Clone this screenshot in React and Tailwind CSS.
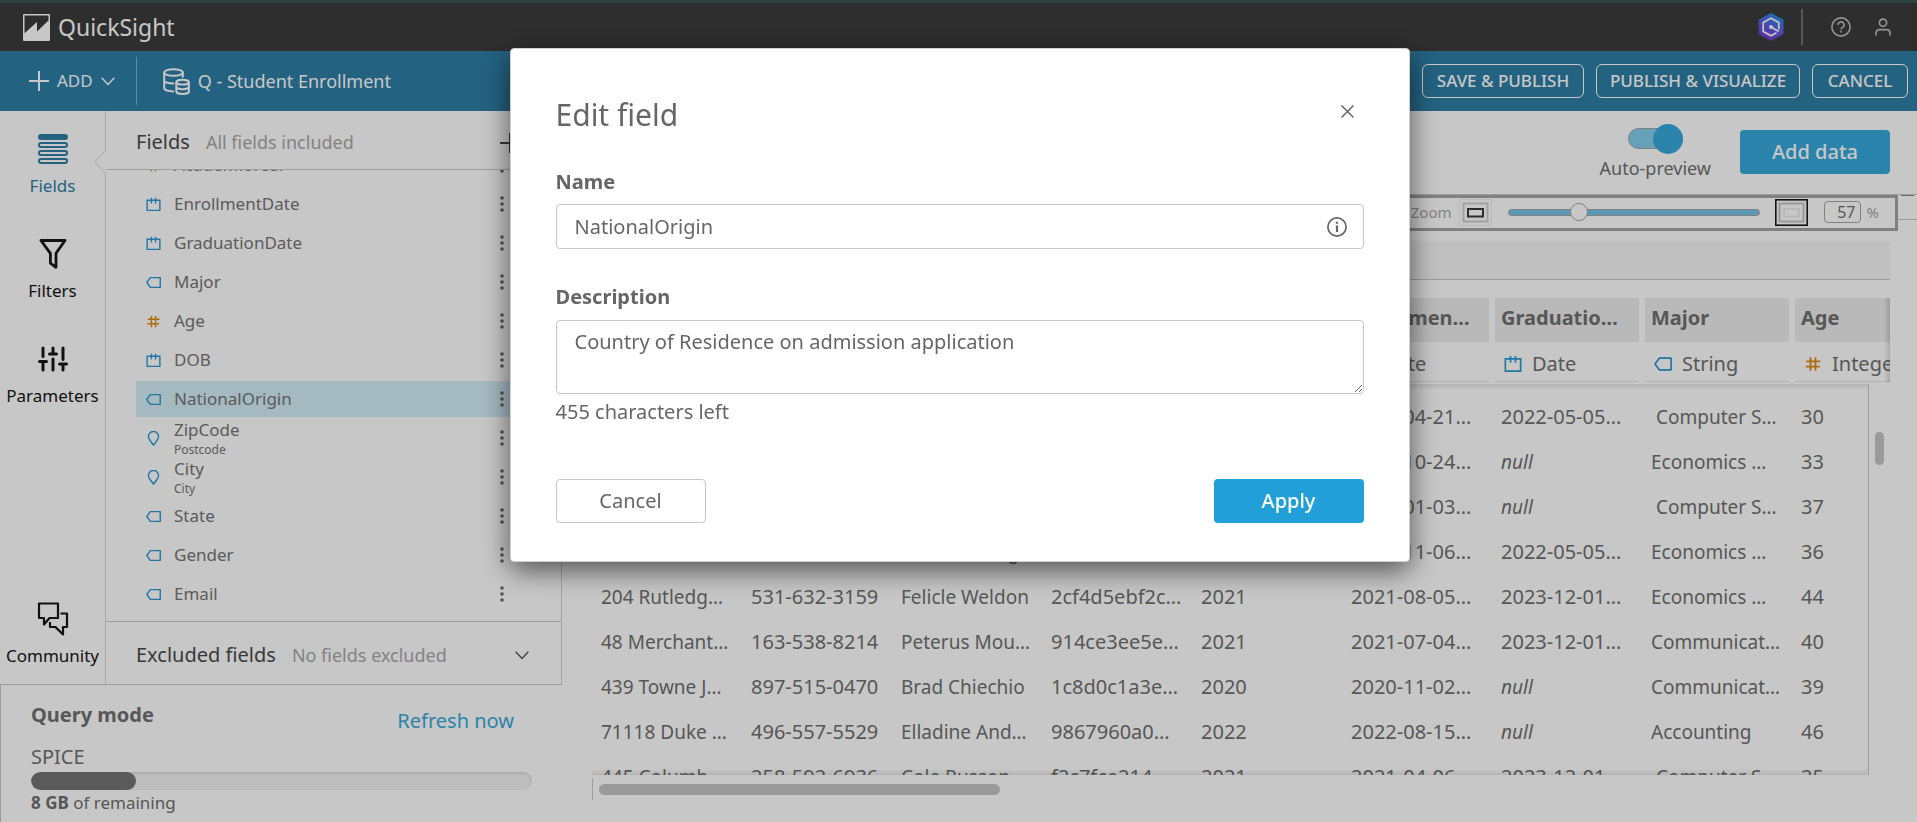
import React, { useState } from "react";

function DateIcon({ size = 16 }) {
  return (
    <svg width={size} height={size} viewBox="0 0 16 16" fill="none" stroke="#2e99d4" strokeWidth="1.5" aria-hidden="true">
      <path d="M1.200 3.500h13.600v10.800H1.200zM5.800.8v6M10.200.8v6" />
    </svg>
  );
}

function StringIcon({ size = 16 }) {
  return (
    <svg width={size} height={size} viewBox="0 0 16 16" fill="none" stroke="#2e99d4" strokeWidth="1.5" strokeLinejoin="round" aria-hidden="true">
      <path d="M4.6 2.8h10.6v10.4H4.6L.9 8z" />
    </svg>
  );
}

function NumberIcon({ size = 16 }) {
  return (
    <svg width={size} height={size} viewBox="0 0 16 16" fill="none" stroke="#de8a12" strokeWidth="1.6" aria-hidden="true">
      <path d="M5.8 2v12M10.200 2v12M2 5.700h12.500M1.500 10.300H14" />
    </svg>
  );
}

function PlaceIcon({ size = 16 }) {
  return (
    <svg width={size} height={size} viewBox="0 0 16 16" fill="none" stroke="#2e99d4" strokeWidth="1.5" strokeLinejoin="round" aria-hidden="true">
      <path d="M8 15.2C6 12 2.6 9 2.6 5.9a5.4 5.4 0 0 1 10.8 0C13.4 9 10 12 8 15.2z" />
    </svg>
  );
}

const typeIcons = { date: DateIcon, string: StringIcon, number: NumberIcon, place: PlaceIcon };

function Chevron() {
  return (
    <svg width="14" height="9" viewBox="0 0 14 9" fill="none" stroke="currentColor" strokeWidth="1.5" aria-hidden="true">
      <path d="M.7.8 7 7.5 13.3.8" />
    </svg>
  );
}

function Plus() {
  return (
    <svg width="20" height="20" viewBox="0 0 20 20" fill="none" stroke="currentColor" strokeWidth="2" aria-hidden="true">
      <path d="M10 0v20M0 10h20" />
    </svg>
  );
}

function Header() {
  return (
    <header className="flex h-[51px] shrink-0 items-center border-t-[3px] border-[#395554] bg-[#3b3b3b] pl-[23px] pr-[26px] text-white">
      <svg width="27" height="27" viewBox="0 0 27 27" aria-hidden="true">
        <rect width="27" height="27" rx="1" fill="#fff" />
        <path d="M1.500 1.500h24v5L14 17.600V8L1.500 19.200z" fill="#3b3b3b" />
      </svg>
      <span className="ml-2 text-[23px]">QuickSight</span>
      <div className="ml-auto flex items-center">
        <svg width="26" height="28" viewBox="0 0 26 28" aria-hidden="true">
          <defs>
            <linearGradient id="hex" x1="0.8" y1="0" x2="0.3" y2="1">
              <stop offset="0" stopColor="#1c96e8" />
              <stop offset="0.5" stopColor="#5a5fe0" />
              <stop offset="1" stopColor="#7a35c8" />
            </linearGradient>
          </defs>
          <path d="M13 0l12.500 6.800v14.400L13 28 .5 21.200V6.800z" fill="url(#hex)" />
          <path d="M20.800 16.500V9.600L13 5.200 5.200 9.600v8.800L13 22.800l5.500-3.100M13 14l7.800 4.400" fill="none" stroke="#fff" strokeWidth="1.700" strokeLinejoin="round" />
          <circle cx="13" cy="14" r="2" fill="#fff" />
        </svg>
        <span className="ml-[17px] h-9 w-0.5 bg-[#707070]" />
        <button type="button" aria-label="Help" className="ml-7 text-[#bdbdbd]">
          <svg width="20" height="20" viewBox="0 0 20 20" fill="none" stroke="currentColor" strokeWidth="1.600">
            <circle cx="10" cy="10" r="9.100" />
            <path d="M7 8a3 3 0 1 1 4.600 2.400c-1 .6-1.600 1-1.600 2" />
            <path d="M10 13.800v1.800" />
          </svg>
        </button>
        <button type="button" aria-label="Account" className="ml-6 text-[#bdbdbd]">
          <svg width="16" height="18" viewBox="0 0 16 18" fill="none" stroke="currentColor" strokeWidth="1.700">
            <circle cx="8" cy="4.700" r="3.600" />
            <path d="M1 17.500v-2.300C1 13 2.500 11.700 4.600 11.700h6.800c2.100 0 3.600 1.300 3.600 3.500v2.300" />
          </svg>
        </button>
      </div>
    </header>
  );
}

function Toolbar() {
  const outline = "h-[34px] rounded-md border border-white text-[17px] font-medium";
  return (
    <div className="flex h-[60px] shrink-0 items-center bg-[#2e7ea4] pr-[9px] pl-[29px] text-white">
      <button type="button" className="flex items-center gap-2 text-[17px]">
        <Plus />
        ADD
        <Chevron />
      </button>
      <span className="ml-[21px] h-12 w-px bg-[#7fb0c8]" />
      <svg className="ml-[26px]" width="27" height="27" viewBox="0 0 27 27" fill="none" stroke="#fff" strokeWidth="2" aria-hidden="true">
        <ellipse cx="10.500" cy="4.500" rx="9.300" ry="3.300" />
        <path d="M1.200 4.500v15.800c0 1.600 4 3 9.800 3.100M19.800 4.500v5M1.200 12.800c0 1.500 4.500 2.800 10 2.800" />
        <ellipse cx="19.600" cy="14.200" rx="6.300" ry="2.400" />
        <path d="M13.300 14.200v9.300c0 1.300 2.800 2.500 6.300 2.500s6.300-1.200 6.300-2.500v-9.300M13.300 18.800c0 1.300 2.800 2.400 6.300 2.400s6.300-1.100 6.300-2.400" />
      </svg>
      <h1 className="ml-2 text-lg">Q - Student Enrollment</h1>
      <div className="ml-auto flex gap-3">
        <button type="button" className={outline + " w-[162px]"}>SAVE &amp; PUBLISH</button>
        <button type="button" className={outline + " w-[204px]"}>PUBLISH &amp; VISUALIZE</button>
        <button type="button" className={outline + " w-24"}>CANCEL</button>
      </div>
    </div>
  );
}

function NavItem({ label, active, children }) {
  return (
    <a href={"#" + label.toLowerCase()} className={"flex flex-col items-center gap-2.5 text-[17px] leading-6 " + (active ? "text-[#2e7ea4]" : "text-[#161616]")}>
      <span className="flex h-[30px] items-center">{children}</span>
      {label}
    </a>
  );
}

function SideNav() {
  return (
    <nav className="relative flex w-[106px] shrink-0 flex-col gap-[41px] border-r border-[#d6d6d6] pt-[23px] pb-4">
      <NavItem label="Fields" active>
        <svg width="30" height="30" viewBox="0 0 30 30" fill="none" stroke="currentColor" strokeWidth="2">
          <rect x="1" y="1" width="28" height="4" rx="2" fill="currentColor" />
          <rect x="1" y="9" width="28" height="4" rx="2" />
          <rect x="1" y="17" width="28" height="4" rx="2" />
          <rect x="1" y="25" width="28" height="4" rx="2" />
        </svg>
      </NavItem>
      <NavItem label="Filters">
        <svg width="28" height="30" viewBox="0 0 28 30" fill="none" stroke="currentColor" strokeWidth="2.800" strokeLinejoin="round">
          <path d="M2 1.500h24L17 14.300v14l-5.600-4.200v-9.800z" />
        </svg>
      </NavItem>
      <NavItem label="Parameters">
        <svg width="30" height="26" viewBox="0 0 30 26" fill="none" stroke="currentColor" strokeWidth="3" strokeLinecap="round">
          <path d="M5 2v8.500M1.500 15.500h7M5 15.500v8.500M15 2v6M11.500 8h7M15 13v11M25 2v11.500M21.500 18h7M25 18v6" />
        </svg>
      </NavItem>
      <div className="mt-auto">
        <NavItem label="Community">
          <svg width="32" height="34" viewBox="0 0 32 34" fill="none" stroke="currentColor" strokeWidth="2.200" strokeLinejoin="round">
            <path d="M2 1.500h19v14.500H12.500L7 22.500V16H2z" />
            <path d="M23.500 11.500H30V25h-4v7.500L18.500 25H13v-5" />
          </svg>
        </NavItem>
      </div>
      <svg className="absolute top-[39px] -right-px" width="12" height="24" viewBox="0 0 12 24" aria-hidden="true">
        <path d="M12 0 1 12l11 12z" fill="#fff" />
        <path d="M11.500.5 1 12l10.500 11.500" fill="none" stroke="#d6d6d6" />
      </svg>
    </nav>
  );
}

const fields = [
  { name: "AcademicYear", type: "number" },
  { name: "EnrollmentDate", type: "date" },
  { name: "GraduationDate", type: "date" },
  { name: "Major", type: "string" },
  { name: "Age", type: "number" },
  { name: "DOB", type: "date" },
  { name: "NationalOrigin", type: "string", selected: true },
  { name: "ZipCode", type: "place", note: "Postcode" },
  { name: "City", type: "place", note: "City" },
  { name: "State", type: "string" },
  { name: "Gender", type: "string" },
  { name: "Email", type: "string" },
];

function FieldRow({ field }) {
  const Icon = typeIcons[field.type];
  return (
    <li className={"flex h-9 shrink-0 items-center pr-14 pl-2.5 " + (field.selected ? "bg-[#d3edf6]" : "")}>
      <Icon size={15} />
      <span className="ml-[13px] flex flex-col">
        <span className="text-[17px] leading-6">{field.name}</span>
        {field.note && <span className="text-xs leading-4">{field.note}</span>}
      </span>
      <button type="button" aria-label={field.name + " menu"} className="ml-auto text-[#6c6c6c]">
        <svg width="6" height="16" viewBox="0 0 6 16" fill="currentColor">
          <circle cx="3" cy="2" r="1.800" />
          <circle cx="3" cy="8" r="1.800" />
          <circle cx="3" cy="14" r="1.800" />
        </svg>
      </button>
    </li>
  );
}

function FieldsPanel() {
  return (
    <section className="flex min-w-0 flex-1 flex-col border-r border-[#d0d0d0]">
      <div className="flex h-[59px] shrink-0 items-center border-b border-[#cacaca] pr-[41px] pt-1 pl-[30px]">
        <h2 className="text-xl text-[#4a4a4a]">Fields</h2>
        <span className="ml-4 text-lg text-[#a8a8a8]">All fields included</span>
        <button type="button" aria-label="Add calculated field" className="ml-auto pt-px text-[#4a4a4a]">
          <Plus />
        </button>
      </div>
      <ul className="flex min-h-0 flex-1 flex-col justify-end gap-[3px] overflow-hidden pb-[9px] pl-[30px] text-[#757575]">
        {fields.map((f) => (
          <FieldRow key={f.name} field={f} />
        ))}
      </ul>
      <div className="flex h-[63px] shrink-0 items-center border-t border-[#cacaca] pr-8 pt-1 pl-[30px] text-[#5a5a5a]">
        <h2 className="text-xl text-[#4a4a4a]">Excluded fields</h2>
        <span className="ml-4 text-lg text-[#a8a8a8]">No fields excluded</span>
        <button type="button" aria-label="Show excluded fields" className="ml-auto">
          <Chevron />
        </button>
      </div>
    </section>
  );
}

function QueryMode() {
  return (
    <section className="h-[138px] shrink-0 border-t border-l border-[#c8c8c8] pt-4 pr-[30px] pl-[30px] text-[#707070]">
      <div className="flex items-start justify-between pr-[18px]">
        <h2 className="text-xl leading-7 font-bold">Query mode</h2>
        <a href="#refresh" className="pt-1.5 text-xl leading-7 text-[#37a9dc]">Refresh now</a>
      </div>
      <div className="pt-2 text-xl leading-7">SPICE</div>
      <div className="mt-px h-[18px] overflow-hidden rounded-full bg-[#f3f3f3] shadow-[inset_0_1px_3px_rgba(0,0,0,0.15)]">
        <div className="h-full w-[21%] rounded-full bg-[#747474]" />
      </div>
      <p className="mt-px text-[17px] leading-6">
        <b>8 GB</b> of remaining
      </p>
    </section>
  );
}

function ZoomBar() {
  const [zoom, setZoom] = useState(57);
  return (
    <div className="flex items-start">
      <div className="flex h-9 flex-1 items-center border-[3px] border-[#a5a5a5] pr-4 pb-0.5">
        <label htmlFor="zoom" className="ml-auto text-[15px] text-[#a8a8a8]">Zoom</label>
        <svg className="ml-[7px]" width="33" height="27" viewBox="0 0 33 27" fill="none" aria-hidden="true">
          <rect x="0.500" y="0.500" width="32" height="26" stroke="#efefef" />
          <rect x="4.500" y="4.500" width="24" height="18" stroke="#d0d0d0" strokeWidth="2" />
          <rect x="9" y="10" width="15" height="7.500" stroke="#3a3a3a" strokeWidth="2" />
        </svg>
        <input
          id="zoom"
          type="range"
          min="5"
          max="200"
          value={zoom}
          onChange={(e) => setZoom(e.target.value)}
          className="ml-4 h-[7px] w-[252px] appearance-none rounded-full border border-[#a5a5a5] bg-[#75c5e9] [&::-webkit-slider-thumb]:size-[18px] [&::-webkit-slider-thumb]:appearance-none [&::-webkit-slider-thumb]:rounded-full [&::-webkit-slider-thumb]:border [&::-webkit-slider-thumb]:border-[#a5a5a5] [&::-webkit-slider-thumb]:bg-white"
        />
        <svg className="ml-[15px]" width="33" height="27" viewBox="0 0 33 27" fill="none" aria-hidden="true">
          <rect x="0.800" y="0.800" width="31.400" height="25.400" stroke="#1a1a1a" strokeWidth="1.600" />
          <rect x="4.500" y="4.500" width="24" height="18" stroke="#c4c4c4" strokeWidth="2" />
          <rect x="9" y="10" width="15" height="7.500" stroke="#ededed" strokeWidth="2" />
        </svg>
        <input
          aria-label="Zoom percent"
          value={zoom}
          onChange={(e) => setZoom(e.target.value)}
          className="ml-4 h-[22px] w-[37px] rounded-sm border border-[#a5a5a5] pr-1 text-right text-base text-[#707070]"
        />
        <span className="ml-1.5 text-[15px] text-[#a8a8a8]">%</span>
      </div>
      <div className="flex h-[25px] w-[19px] items-start justify-center border-b border-[#cacaca]">
        <span className="h-px w-[13px] bg-[#8a8a8a]" />
      </div>
    </div>
  );
}

const columns = [
  { name: "Address", type: "string", label: "String" },
  { name: "Phone", type: "string", label: "String" },
  { name: "Name", type: "string", label: "String" },
  { name: "StudentID", type: "string", label: "String" },
  { name: "Academic…", type: "number", label: "Integer" },
  { name: "Enrollmen…", type: "date", label: "Date" },
  { name: "Graduatio…", type: "date", label: "Date" },
  { name: "Major", type: "string", label: "String" },
  { name: "Age", type: "number", label: "Integer" },
];

const rows = [
  ["", "", "", "", "", "2021-04-21…", "2022-05-05…", "\u00a0Computer S…", "30"],
  ["", "", "", "", "", "2021-10-24…", null, "Economics …", "33"],
  ["", "", "", "", "", "2022-01-03…", null, "\u00a0Computer S…", "37"],
  ["", "", "Leila Harding", "", "", "2021-11-06…", "2022-05-05…", "Economics …", "36"],
  ["204 Rutledg…", "531-632-3159", "Felicle Weldon", "2cf4d5ebf2c…", "2021", "2021-08-05…", "2023-12-01…", "Economics …", "44"],
  ["48 Merchant…", "163-538-8214", "Peterus Mou…", "914ce3ee5e…", "2021", "2021-07-04…", "2023-12-01…", "Communicat…", "40"],
  ["439 Towne J…", "897-515-0470", "Brad Chiechio", "1c8d0c1a3e…", "2020", "2020-11-02…", null, "Communicat…", "39"],
  ["71118 Duke …", "496-557-5529", "Elladine And…", "9867960a0…", "2022", "2022-08-15…", null, "Accounting", "46"],
  ["445 Columb…", "258-592-6936", "Cole Russon", "f2c7fce214…", "2021", "2021-04-06…", "2023-12-01…", "\u00a0Computer S…", "25"],
];

function DataGrid() {
  return (
    <div className="flex min-h-0 flex-1 flex-col pt-2.5 pr-[27px] pl-[30px] text-[#707070]">
      <div className="h-[39px] shrink-0 border-b border-[#c8c8c8] bg-[#f6f6f6]" />
      <div className="relative mt-[18px] shrink-0 overflow-hidden pl-[3px]">
        <table className="w-[1350px] table-fixed border-collapse text-left">
          <thead>
            <tr>
              {columns.map((c) => (
                <th key={c.name} className="p-0 pr-1.5 text-xl whitespace-nowrap">
                  <div className="flex h-11 items-center bg-[#ededed] pb-1 pl-1.5">{c.name}</div>
                </th>
              ))}
            </tr>
          </thead>
          <tbody>
            <tr>
              {columns.map((c) => {
                const Icon = typeIcons[c.type];
                return (
                  <td key={c.name} className="p-0 pr-1.5 text-xl whitespace-nowrap">
                    <div className="flex h-10 items-center gap-2.5 border-b border-[#e4e4e4] pt-1 pl-[9px]">
                      <Icon size={18} />
                      {c.label}
                    </div>
                  </td>
                );
              })}
            </tr>
          </tbody>
        </table>
        <div className="absolute inset-y-0 right-0 w-1.5 bg-linear-to-l from-black/15 to-transparent" />
      </div>
      <div className="relative mt-0.5 flex min-h-0 flex-1">
        <div className="relative mr-1.5 min-w-0 flex-1 overflow-hidden border-r border-[#c8c8c8] pt-2.5 pl-[3px]">
          <div className="absolute inset-x-0 top-0 h-1.5 bg-linear-to-b from-black/10 to-transparent" />
          <div className="absolute inset-x-0 bottom-0 h-1.5 bg-linear-to-t from-black/10 to-transparent" />
          <table className="w-[1350px] table-fixed border-collapse text-left">
            <tbody>
              {rows.map((row, i) => (
                <tr key={i} className="h-[45px]">
                  {row.map((cell, j) => (
                    <td key={j} className={"p-0 pl-1.5 whitespace-nowrap " + ([1, 3, 4, 5, 6, 8].includes(j) && cell ? "text-xl leading-7" : "text-[19px] leading-7")}>
                      {cell === null ? <i>null</i> : cell}
                    </td>
                  ))}
                </tr>
              ))}
            </tbody>
          </table>
        </div>
        <div className="w-[15px] pt-12">
          <div className="h-[33px] w-[9px] rounded-full bg-[#c6c6c6]" />
        </div>
      </div>
      <div className="mt-[3px] mb-[22px] flex h-[22px] shrink-0 items-center border-l border-[#c8c8c8] pl-1.5">
        <div className="h-[11px] w-[401px] rounded-full bg-[#c6c6c6]" />
      </div>
    </div>
  );
}

function Preview() {
  return (
    <main className="flex min-w-0 flex-1 flex-col">
      <div className="flex h-[84px] shrink-0 items-center justify-end gap-[29px] border-b border-[#cacaca] pr-[27px] pb-0.5">
        <label className="flex flex-col items-center text-lg leading-6 text-[#707070]">
          <span className="relative flex h-[30px] w-[55px] items-center">
            <input type="checkbox" defaultChecked className="h-[21px] w-full appearance-none rounded-full border border-[#a5a5a5] bg-[#85cdee]" />
            <span className="absolute right-0 size-[30px] rounded-full bg-[#37a9dc]" />
          </span>
          <span className="pt-0.5">Auto-preview</span>
        </label>
        <button type="button" className="h-11 w-[150px] rounded-sm bg-[#37a9dc] text-xl font-medium text-white">Add data</button>
      </div>
      <ZoomBar />
      <DataGrid />
    </main>
  );
}

function EditFieldDialog() {
  const [description, setDescription] = useState("Country of Residence on admission application");
  return (
    <div className="fixed inset-0 flex items-start justify-center bg-black/22 pt-12 pl-0.5">
      <form
        role="dialog"
        aria-labelledby="dialog-title"
        className="w-[900px] rounded-sm border border-[#d0d0d0] bg-white px-[45px] pb-[38px] text-xl leading-7 text-[#666] shadow-[0_8px_28px_rgba(0,0,0,0.6)]"
      >
        <div className="flex items-center justify-between pt-[46px] pr-2.5">
          <h2 id="dialog-title" className="text-3xl leading-10">Edit field</h2>
          <button type="button" aria-label="Close" className="pb-2">
            <svg width="13" height="13" viewBox="0 0 13 13" fill="none" stroke="currentColor" strokeWidth="1.500">
              <path d="M.5.5l12 12M12.500.5l-12 12" />
            </svg>
          </button>
        </div>
        <label htmlFor="field-name" className="mt-[33px] block font-bold">Name</label>
        <div className="mt-2 flex h-[45px] items-center rounded-sm border border-[#c6c6c6] pr-4 pl-[18px]">
          <input id="field-name" defaultValue="NationalOrigin" className="min-w-0 flex-1 bg-transparent outline-none" />
          <svg width="20" height="20" viewBox="0 0 20 20" fill="none" stroke="currentColor" strokeWidth="1.700" aria-hidden="true">
            <circle cx="10" cy="10" r="9.100" />
            <path d="M10 8.500V15M10 4.800v2" strokeWidth="2.200" />
          </svg>
        </div>
        <label htmlFor="field-description" className="mt-[34px] block font-bold">Description</label>
        <textarea
          id="field-description"
          value={description}
          maxLength={500}
          onChange={(e) => setDescription(e.target.value)}
          className="mt-[9px] block h-[74px] w-full resize-y rounded-sm border border-[#c6c6c6] px-[18px] py-[7px] outline-none"
        />
        <p className="mt-1">{500 - description.length} characters left</p>
        <div className="mt-[53px] flex justify-between">
          <button type="button" className="h-11 w-[150px] rounded-sm border border-[#c6c6c6]">Cancel</button>
          <button type="submit" className="h-11 w-[150px] rounded-sm bg-[#219fd9] font-medium text-white">Apply</button>
        </div>
      </form>
    </div>
  );
}

export default function App() {
  return (
    <div className="flex h-screen flex-col overflow-hidden bg-white font-['Noto_Sans','Open_Sans',sans-serif]">
      <Header />
      <Toolbar />
      <div className="flex min-h-0 flex-1">
        <aside className="flex w-[562px] shrink-0 flex-col">
          <div className="flex min-h-0 flex-1">
            <SideNav />
            <FieldsPanel />
          </div>
          <QueryMode />
        </aside>
        <Preview />
      </div>
      <EditFieldDialog />
    </div>
  );
}
